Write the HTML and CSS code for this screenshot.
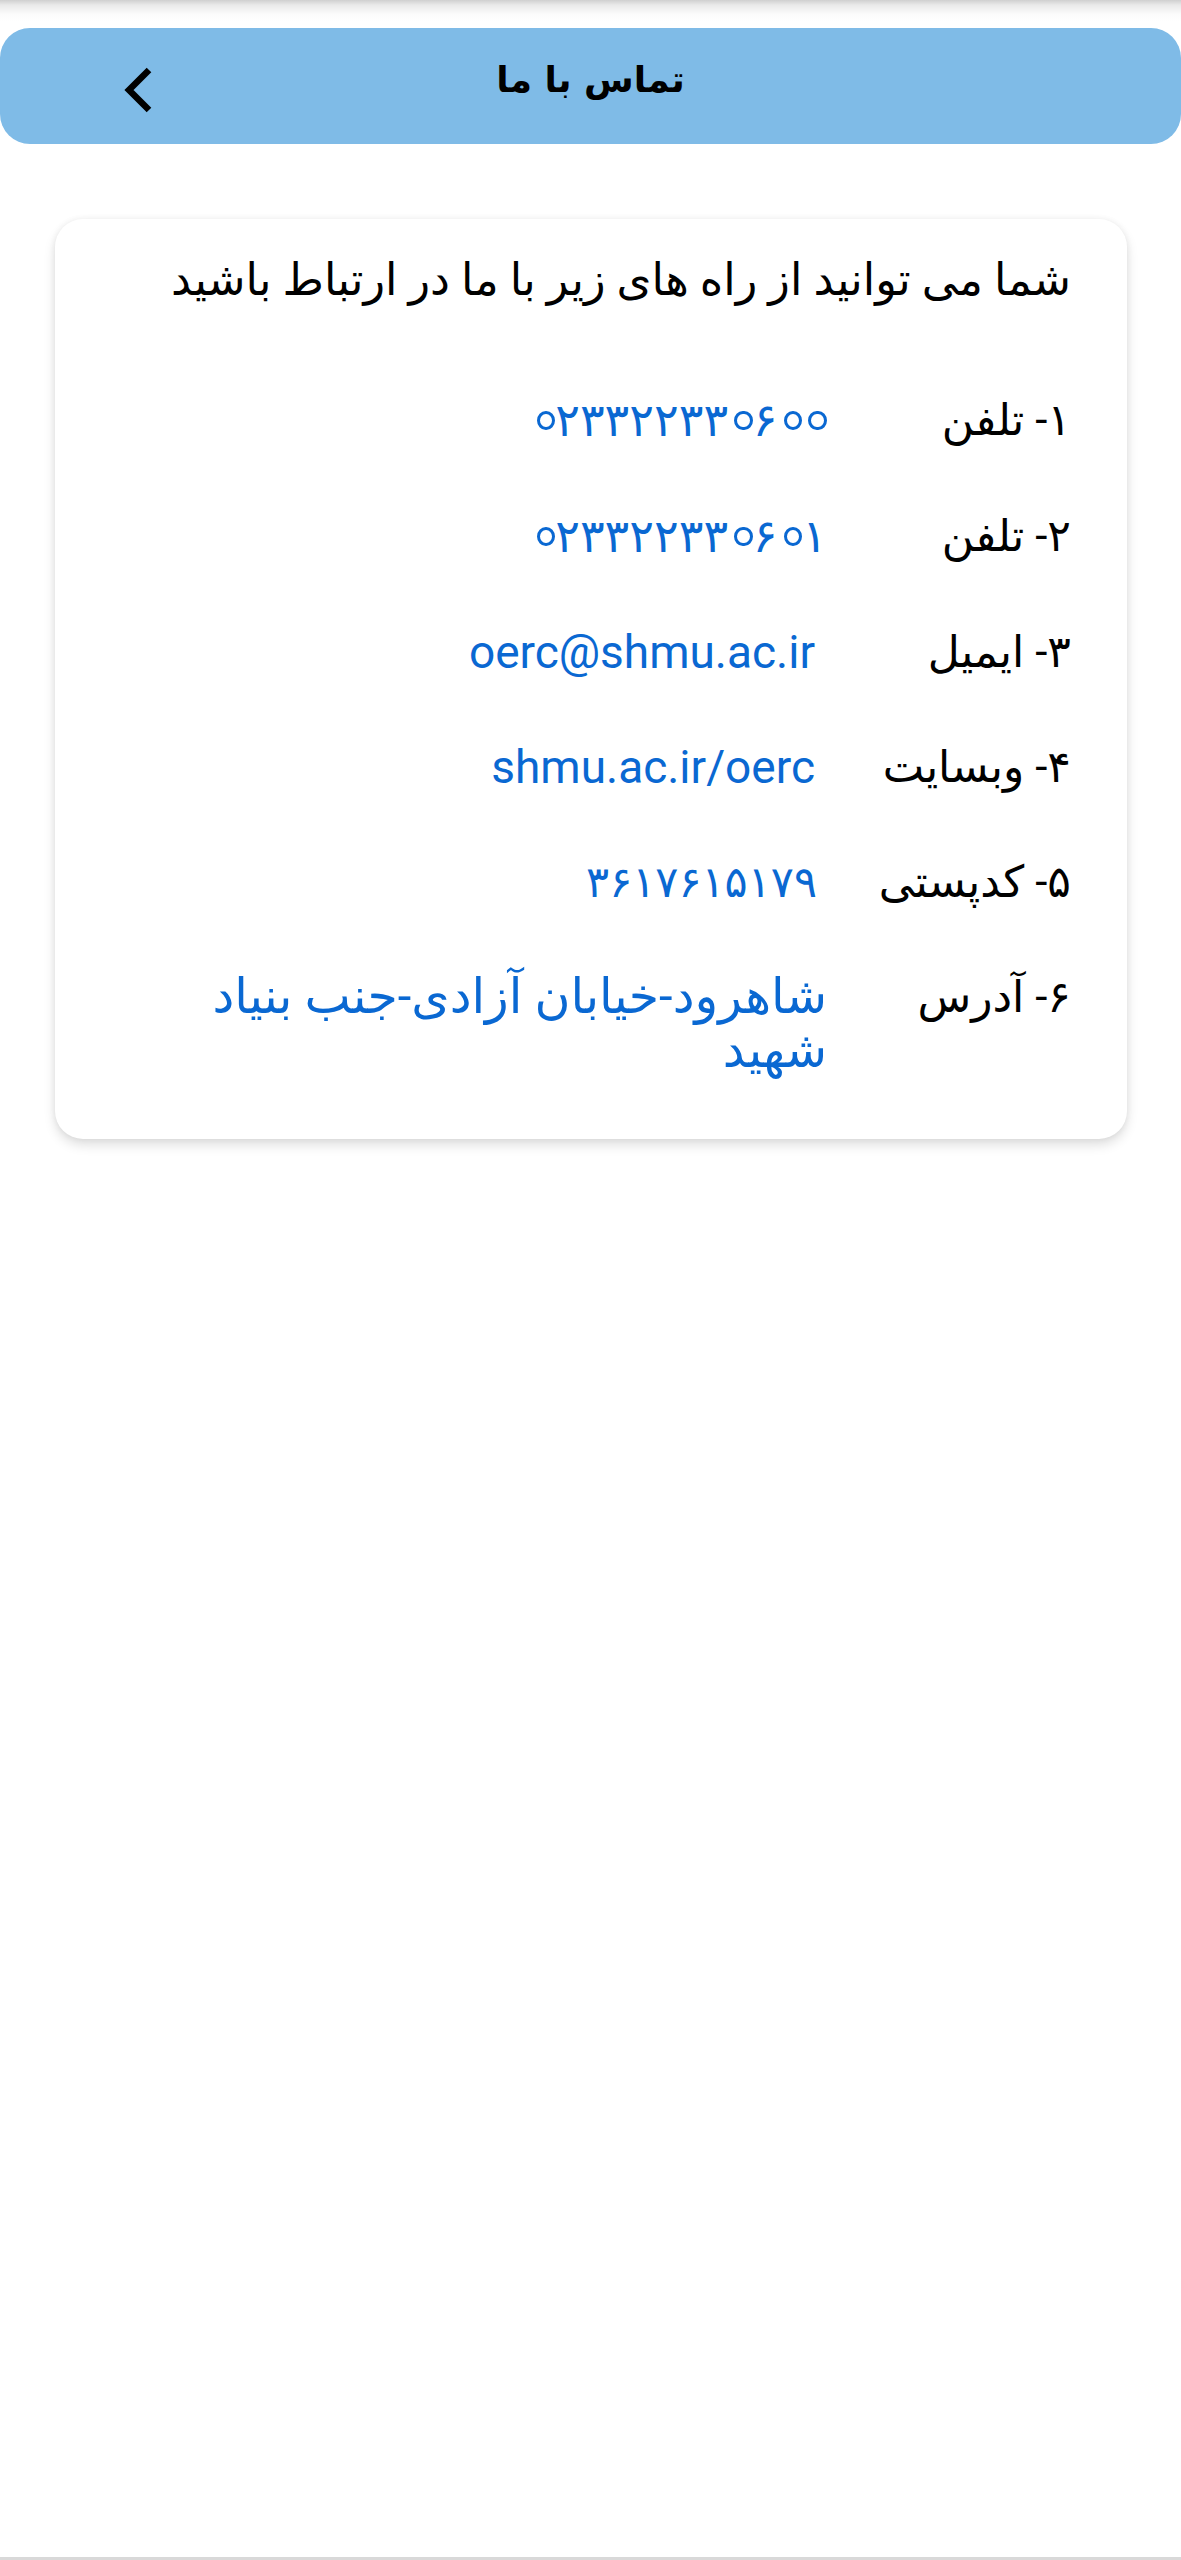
FILE: index.html
```html
<!DOCTYPE html>
<html lang="fa" dir="rtl">
<head>
<meta charset="utf-8">
<title>تماس با ما</title>
<link rel="stylesheet" href="styles.css">
</head>
<body>
<div class="page">
  <div class="top-shade"></div>
  <header class="appbar">
    <span class="appbar-spacer"></span>
    <h1 class="appbar-title">تماس با ما</h1>
    <button class="back-btn" aria-label="بازگشت">
      <svg width="40" height="52" viewBox="0 0 40 52" aria-hidden="true">
        <polyline points="27,6 7,26 27,46" fill="none" stroke="#000" stroke-width="6.5" stroke-linecap="butt" stroke-linejoin="miter"/>
      </svg>
    </button>
  </header>

  <main class="card">
    <p class="intro">شما می توانید از راه های زیر با ما در ارتباط باشید</p>
    <div class="rows">
      <div class="label">۱- تلفن</div>
      <div class="value"><span class="num"><span class="zero">۰</span>۲۳۳۲۲۳۳<span class="zero">۰</span>۶<span class="zero">۰</span><span class="zero">۰</span></span></div>

      <div class="label">۲- تلفن</div>
      <div class="value"><span class="num"><span class="zero">۰</span>۲۳۳۲۲۳۳<span class="zero">۰</span>۶<span class="zero">۰</span>۱</span></div>

      <div class="label">۳- ایمیل</div>
      <div class="value latin">oerc@shmu.ac.ir</div>

      <div class="label">۴- وبسایت</div>
      <div class="value latin">shmu.ac.ir/oerc</div>

      <div class="label">۵- کدپستی</div>
      <div class="value postal"><span class="num">۳۶۱۷۶۱۵۱۷۹</span></div>

      <div class="label">۶- آدرس</div>
      <div class="value address">شاهرود-خیابان آزادی-جنب بنیاد شهید</div>
    </div>
  </main>

  <div class="bottom-line"></div>
</div>
</body>
</html>
```

FILE: styles.css
```css
* {
  box-sizing: border-box;
}

html, body {
  margin: 0;
  padding: 0;
  background: #ffffff;
}

body {
  font-family: Roboto, "DejaVu Sans", sans-serif;
  color: #000;
}

.page {
  display: flex;
  flex-direction: column;
  min-height: 2560px;
}

.top-shade {
  height: 28px;
  background: linear-gradient(to bottom, #cfcfcf 0px, #e9e9e9 5px, #fbfbfb 14px, #ffffff 22px);
}

.appbar {
  height: 116px;
  background: #7fbbe7;
  border-radius: 30px;
  display: grid;
  grid-template-columns: 1fr auto 1fr;
  align-items: center;
}

.appbar-title {
  margin: 0;
  font-family: "DejaVu Sans", sans-serif;
  font-weight: bold;
  font-size: 36px;
  line-height: 54px;
  padding-bottom: 12px;
}

.back-btn {
  justify-self: end;
  border: 0;
  background: transparent;
  padding: 0;
  margin: 8px 0 0 122px;
  display: flex;
  align-items: center;
}

.card {
  margin: 75px 54px 0 55px;
  background: #fff;
  border-radius: 28px;
  box-shadow: 0 6px 12px rgba(0, 0, 0, 0.13), 0 0 6px rgba(0, 0, 0, 0.06);
  padding: 34px 56px 61px 56px;
}

.intro {
  margin: 0 0 86px 0;
  font-size: 44.7px;
  line-height: 54px;
}

.rows {
  display: grid;
  grid-template-columns: 244px 1fr;
  row-gap: 61px;
  font-size: 44px;
  line-height: 54px;
}

.label {
  color: #000;
}

.value {
  color: #0a68d2;
  padding-left: 40px;
}

.num {
  direction: ltr;
  unicode-bidi: isolate;
  font-size: 46px;
}

.zero {
  display: inline-block;
  position: relative;
  color: transparent;
}

.zero::after {
  content: "";
  position: absolute;
  left: 50%;
  bottom: 0.36em;
  width: 0.27em;
  height: 0.3em;
  margin-left: -0.135em;
  border: 0.075em solid #0a68d2;
  border-radius: 50%;
}

.value.postal {
  padding-right: 10px;
}

.value.postal .num {
  font-size: 43px;
}

.value.latin {
  font-family: Roboto, sans-serif;
  font-size: 46px;
  padding-right: 12px;
}

.value.address {
  font-size: 49px;
  padding-left: 70px;
}

.bottom-line {
  margin-top: auto;
  height: 3px;
  background: #d9d9d9;
}
```
